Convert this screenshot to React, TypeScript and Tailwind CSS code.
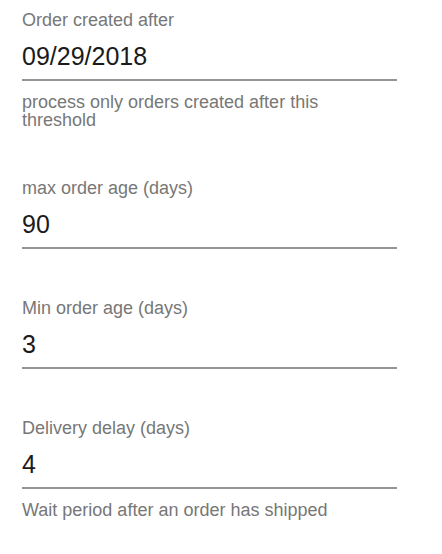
import React from 'react';

type Field = {
  label: string;
  value: string;
  helper?: string;
};

const fields: Field[] = [
  {
    label: 'Order created after',
    value: '09/29/2018',
    helper: 'process only orders created after this threshold',
  },
  { label: 'max order age (days)', value: '90' },
  { label: 'Min order age (days)', value: '3' },
  {
    label: 'Delivery delay (days)',
    value: '4',
    helper: 'Wait period after an order has shipped',
  },
];

const FormField: React.FC<{ field: Field }> = ({ field }) => (
  <div className="mb-[49px] w-[375px]">
    <div className="text-[18px] leading-[20px] text-[#777777]">{field.label}</div>
    <div className="mt-[10px] h-[41px] border-b-2 border-[#949494] pb-[7px]">
      <div className="text-[25px] leading-[32px] text-[#1a1a1a]">{field.value}</div>
    </div>
    {field.helper && (
      <div className="mt-[12px] w-[340px] text-[18px] leading-[18px] text-[#777777]">
        {field.helper}
      </div>
    )}
  </div>
);

const App: React.FC = () => {
  return (
    <div
      className="min-h-screen bg-white pl-[22px] pt-[10px]"
      style={{ fontFamily: '"Liberation Sans", Arial, sans-serif' }}
    >
      {fields.map((f) => (
        <FormField key={f.label} field={f} />
      ))}
    </div>
  );
};

export default App;
